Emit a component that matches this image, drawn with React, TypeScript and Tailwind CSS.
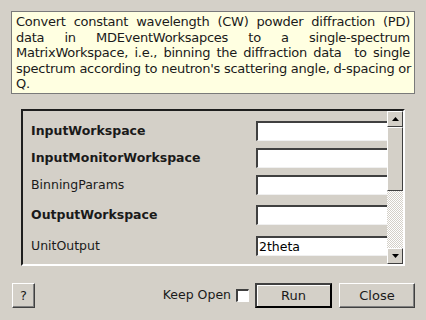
import React from "react"

const font = { fontFamily: '"DejaVu Sans", "Liberation Sans", sans-serif' }

const rows = [
  { label: "InputWorkspace", bold: true, value: "", gap: "mb-[7px]" },
  { label: "InputMonitorWorkspace", bold: true, value: "", gap: "mb-[7px]" },
  { label: "BinningParams", bold: false, value: "", gap: "mb-[10px]" },
  { label: "OutputWorkspace", bold: true, value: "", gap: "mb-[11px]" },
  { label: "UnitOutput", bold: false, value: "2theta", gap: "mb-[8px]" },
  { label: "", bold: false, value: "", gap: "" },
]

const descLines = [
  "Convert constant wavelength (CW) powder diffraction (PD)",
  "data in MDEventWorksapces to a single-spectrum",
  "MatrixWorkspace, i.e., binning the diffraction data\u00a0 to single",
  "spectrum according to neutron's scattering angle, d-spacing or",
]

function Field({ value }: { value: string }) {
  return (
    <div className="h-[20px] w-[150px] shrink-0 bg-white border-t-2 border-l-2 border-b border-r border-t-[#404040] border-l-[#404040] border-b-[#f0f0f0] border-r-[#f0f0f0] pl-[1px] text-[12.5px] leading-[17px] text-black">
      {value}
    </div>
  )
}

function ScrollBar() {
  return (
    <div className="w-[16px] shrink-0 flex flex-col bg-[#d4d0c8]">
      <div className="h-[16px] flex items-center justify-center border border-t-white border-l-white border-b-[#404040] border-r-[#404040] bg-[#d4d0c8]">
        <svg width="7" height="4" viewBox="0 0 7 4"><path d="M3.5 0 L7 4 L0 4 Z" fill="#000" /></svg>
      </div>
      <div className="h-[64px] border border-t-white border-l-white border-b-[#404040] border-r-[#404040] bg-[#d4d0c8]" />
      <div
        className="flex-1"
        style={{ backgroundImage: "repeating-conic-gradient(#ffffff 0% 25%, #d4d0c8 0% 50%)", backgroundSize: "2px 2px" }}
      />
      <div className="h-[16px] flex items-center justify-center border border-t-white border-l-white border-b-[#404040] border-r-[#404040] bg-[#d4d0c8]">
        <svg width="7" height="4" viewBox="0 0 7 4"><path d="M0 0 L7 0 L3.5 4 Z" fill="#000" /></svg>
      </div>
    </div>
  )
}

function Button({ label, isDefault, className }: { label: string; isDefault?: boolean; className: string }) {
  return (
    <button
      className={`h-[25px] flex items-center justify-center text-[13px] text-[#1a1a1a] bg-[#d4d0c8] ${isDefault ? "border-2 border-t-[#404040] border-l-[#404040] border-b-black border-r-black shadow-[inset_1px_1px_0_#ffffff]" : "border border-t-white border-l-white border-b-[#404040] border-r-[#404040] shadow-[inset_-1px_-1px_0_#808080]"} ${className}`}
    >
      {label}
    </button>
  )
}

export default function App() {
  return (
    <div className="w-[426px] h-[320px] bg-[#d4d0c8] overflow-hidden flex flex-col" style={font}>
      <div className="ml-[11px] mt-[11px] w-[404px] h-[83px] border border-[#7a7a7a] bg-[#ffffe1] pl-[4px] pr-[4px] pt-[2px] text-[13px] tracking-[-0.25px] leading-[15.5px] text-[#1a1a1a]">
        {descLines.map((l, i) => (
          <div key={i} className="whitespace-nowrap text-justify [text-align-last:justify]">{l}</div>
        ))}
        <div>Q.</div>
      </div>

      <div className="ml-[21px] mt-[15px] w-[384px] h-[157px] flex border-2 border-t-[#1e1e1e] border-l-[#1e1e1e] border-b-white border-r-white">
        <div className="flex-1 overflow-hidden pt-[10px] pl-[8px] flex flex-col">
          {rows.map((r, i) => (
            <div key={i} className={`flex items-center shrink-0 ${r.gap}`}>
              <div className={`w-[225px] shrink-0 text-[12.5px] text-[#1a1a1a] ${r.bold ? "font-bold" : ""}`}>{r.label}</div>
              <Field value={r.value} />
            </div>
          ))}
        </div>
        <ScrollBar />
      </div>

      <div className="mt-[17px] flex items-center">
        <Button label="?" className="ml-[12px] w-[23px]" />
        <span className="ml-auto text-[12.5px] text-[#1a1a1a]">Keep Open</span>
        <div className="ml-[5px] w-[13px] h-[13px] bg-white border-t-2 border-l-2 border-t-[#404040] border-l-[#404040] border-b border-r border-b-white border-r-white" />
        <Button label="Run" isDefault className="ml-[6px] w-[77px]" />
        <Button label="Close" className="ml-[7px] mr-[11px] w-[76px]" />
      </div>
    </div>
  )
}
